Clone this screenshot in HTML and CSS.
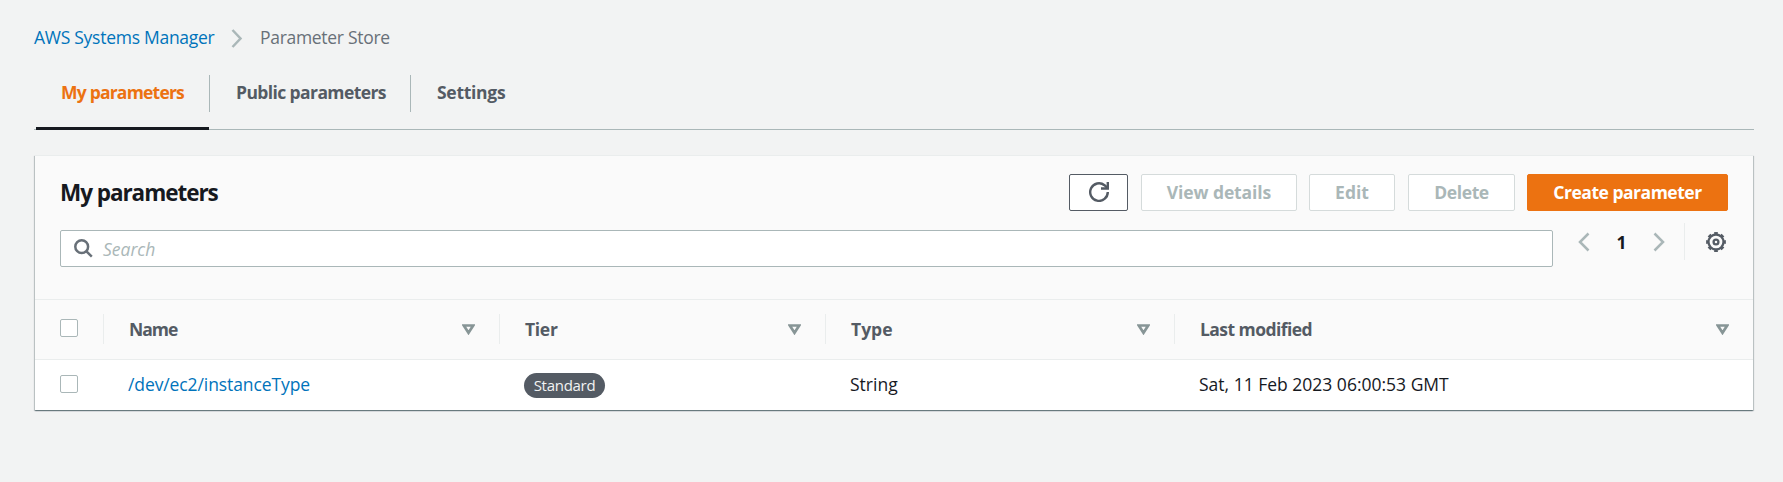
FILE: index.html
```html
<!DOCTYPE html>
<html lang="en">
<head>
<meta charset="utf-8">
<title>Parameter Store</title>
<link rel="stylesheet" href="styles.css">
</head>
<body>
<main class="page">
  <nav class="breadcrumbs">
    <a class="crumb-link">AWS Systems Manager</a>
    <svg class="crumb-chevron" width="12" height="19" viewBox="0 0 12 19"><path d="M1.5 1 9.500 9.500 1.500 18"/></svg>
    <span class="crumb-current">Parameter Store</span>
  </nav>
  <div class="tabs">
    <div class="tab tab-active">My parameters</div>
    <div class="tab tab-public">Public parameters</div>
    <div class="tab tab-settings">Settings</div>
  </div>
  <section class="card">
    <header class="card-head">
      <h2 class="title">My parameters</h2>
      <div class="actions">
        <button class="btn btn-refresh" aria-label="Refresh"><svg width="20" height="20" viewBox="0 0 20 20"><path d="M18.800 10A8.800 8.800 0 1 1 15.500 3.200L18.500 6"/><path d="M18.800 0V6.500H12"/></svg></button>
        <button class="btn btn-view" disabled>View details</button>
        <button class="btn btn-edit" disabled>Edit</button>
        <button class="btn btn-delete" disabled>Delete</button>
        <button class="btn btn-primary">Create parameter</button>
      </div>
    </header>
    <div class="filter-row">
      <div class="search">
        <svg width="19" height="19" viewBox="0 0 19 19"><circle cx="7.700" cy="7.700" r="6.400"/><path d="M12.200 12.200 17.800 17.600"/></svg>
        <span>Search</span>
      </div>
      <div class="pager">
        <svg class="chev" width="12" height="20" viewBox="0 0 12 20"><path d="M10.500 1.500 2 10 10.500 18.500"/></svg>
        <span class="page-no">1</span>
        <svg class="chev" width="12" height="20" viewBox="0 0 12 20"><path d="M1.500 1.500 10 10 1.500 18.500"/></svg>
        <span class="pager-line"></span>
        <svg class="gear" width="20" height="20" viewBox="0 0 20 20"><circle cx="10" cy="10" r="7.500"/><circle class="teeth" cx="10" cy="10" r="8.900" pathLength="80"/><circle cx="10" cy="10" r="2.400"/></svg>
      </div>
    </div>
    <div class="row row-head">
      <div class="cell cell-check"><span class="checkbox"></span></div>
      <div class="cell"><span class="label-name">Name</span><svg class="sort" width="13" height="11" viewBox="0 0 13 11"><path d="M1.800 1.500H11.200L6.500 8.800Z"/></svg></div>
      <div class="cell"><span class="label-tier">Tier</span><svg class="sort" width="13" height="11" viewBox="0 0 13 11"><path d="M1.800 1.500H11.200L6.500 8.800Z"/></svg></div>
      <div class="cell"><span class="label-type">Type</span><svg class="sort" width="13" height="11" viewBox="0 0 13 11"><path d="M1.800 1.500H11.200L6.500 8.800Z"/></svg></div>
      <div class="cell"><span class="label-last">Last modified</span><svg class="sort" width="13" height="11" viewBox="0 0 13 11"><path d="M1.800 1.500H11.200L6.500 8.800Z"/></svg></div>
    </div>
    <div class="row row-data">
      <div class="cell cell-check"><span class="checkbox"></span></div>
      <div class="cell"><a class="link">/dev/ec2/instanceType</a></div>
      <div class="cell"><span class="badge">Standard</span></div>
      <div class="cell">String</div>
      <div class="cell">Sat, 11 Feb 2023 06:00:53 GMT</div>
    </div>
  </section>
</main>
</body>
</html>
```
FILE: styles.css
```css
* { box-sizing: border-box; }
body {
  margin: 0;
  background: #f2f3f3;
  color: #16191f;
  font-family: "Open Sans", "Noto Sans", sans-serif;
  font-size: 17.5px;
  line-height: 26px;
}
.page { height: 482px; padding: 24px 29px 0 34px; }
.breadcrumbs { display: flex; align-items: center; height: 26px; white-space: nowrap; }
.crumb-link { color: #0073bb; width: 181px; letter-spacing: -0.27px; }
.crumb-chevron { margin: 2px 17px 0 16px; fill: none; stroke: #aab7b8; stroke-width: 2.5; }
.crumb-current { color: #687078; letter-spacing: -0.3px; }
.tabs { display: flex; height: 80px; padding: 25px 0 0 2px; border-bottom: 1px solid #aab7b8; font-weight: 700; color: #545b64; white-space: nowrap; width: 1720px; }
.tab { height: 37px; padding: 4px 26px; border-left: 1px solid #aab7b8; }
.tab-active { width: 173px; height: 55px; padding-left: 25px; border-left: 0; border-bottom: 3px solid #16191f; color: #ec7211; letter-spacing: -0.79px; }
.tab-public { width: 201px; letter-spacing: -0.6px; }
.tab-settings { letter-spacing: -0.28px; }
.card { width: 1718px; margin: 25px 0 0 1px; height: 255px; background: #fff; border-top: 1px solid #eaeded; box-shadow: 0 1px 1px 0 rgba(0,28,36,.35), 1px 1px 1px 0 rgba(0,28,36,.18), -1px 1px 1px 0 rgba(0,28,36,.18); }
.card-head { display: flex; justify-content: space-between; height: 74px; padding: 18px 25px 0 25px; background: #fafafa; }
.title { margin: 0; font-size: 22.5px; letter-spacing: -1.05px; line-height: 37px; white-space: nowrap; }
.actions { display: flex; }
.btn { display: flex; align-items: center; justify-content: center; height: 37px; padding: 0 0 2px; background: #fff; border: 1px solid #d5dbdb; border-radius: 2px; color: #aab7b8; font: inherit; font-weight: 700; white-space: nowrap; }
.btn-refresh { width: 59px; padding: 0 0 1px; margin-right: 13px; border-color: #545b64; }
.btn-refresh svg { fill: none; stroke: #545b64; stroke-width: 2.4; }
.btn-view { width: 156px; margin-right: 12px; letter-spacing: -0.1px; }
.btn-edit { width: 86px; margin-right: 13px; }
.btn-delete { width: 107px; margin-right: 12px; letter-spacing: -0.38px; }
.btn-primary { width: 201px; background: #ec7211; border-color: #ec7211; color: #fff; letter-spacing: -0.48px; }
.filter-row { display: flex; height: 69px; padding-left: 25px; background: #fafafa; }
.search { display: flex; align-items: center; width: 1493px; height: 37px; padding: 0 13px; background: #fff; border: 1px solid #aab7b8; border-radius: 2px; color: #aab7b8; font-style: italic; }
.search svg { margin-right: 10px; fill: none; stroke: #687078; stroke-width: 2.5; }
.pager { display: flex; align-items: center; height: 37px; margin: -7px 0 0 25px; }
.chev { fill: none; stroke: #aab7b8; stroke-width: 2.5; }
.page-no { width: 63px; text-align: center; font-weight: 700; }
.pager-line { width: 1px; height: 37px; margin: 0 21px 0 19px; background: #eaeded; }
.gear { fill: none; stroke: #545b64; stroke-width: 2.3; }
.gear .teeth { stroke-width: 2; stroke-dasharray: 5.4 4.6; stroke-dashoffset: 2.7; }
.row { display: grid; grid-template-columns: 68px 396px 326px 349px 1fr; border-top: 1px solid #eaeded; }
.row-head { height: 60px; padding-top: 14px; background: #fafafa; font-weight: 700; color: #545b64; }
.row-data { height: 50px; padding-top: 10px; }
.cell { display: flex; align-items: center; height: 30px; padding: 0 24px 0 25px; border-left: 1px solid transparent; white-space: nowrap; }
.cell:last-child { padding-right: 24px; }
.row-head .cell { border-left-color: #eaeded; }
.row-head span:not(.checkbox) { margin-top: -1px; }
.row .cell-check { padding: 0 0 3px 24px; border-left-color: transparent; }
.row-data .cell { height: 28px; padding-left: 24px; }
.row-data .cell-check { padding-bottom: 1px; }
.checkbox { width: 18px; height: 18px; border: 1px solid #aab7b8; border-radius: 2px; background: #fff; }
.sort { margin-left: auto; fill: none; stroke: #879596; stroke-width: 2.7; }
.label-name { letter-spacing: -1px; }
.label-tier { letter-spacing: -0.3px; }
.label-last { letter-spacing: -0.55px; }
.link { color: #0073bb; letter-spacing: -0.1px; }
.badge { display: flex; align-items: center; justify-content: center; width: 81px; height: 25px; margin-top: 2px; border-radius: 13px; background: #545b64; color: #f2f3f3; font-size: 15px; letter-spacing: -0.28px; }
```
